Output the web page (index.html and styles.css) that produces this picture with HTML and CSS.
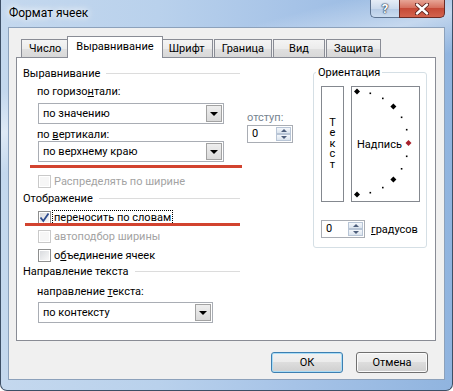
FILE: index.html
```html
<!DOCTYPE html>
<html lang="ru">
<head>
    <meta charset="UTF-8">
    <title>Формат ячеек</title>
    <link rel="stylesheet" href="styles.css">
</head>
<body>
<div class="window">
    <!-- Заголовок окна -->
    <div class="titlebar">
        <span class="title">Формат ячеек</span>
        <div class="caption">
            <span class="cap-btn cap-help">?</span>
            <span class="cap-btn cap-close">
                <svg width="14" height="12" viewBox="0 0 14 12">
                    <path d="M2 1.5 L12 10.5 M12 1.5 L2 10.5" stroke="#5a1f1a" stroke-width="4.2" stroke-linecap="round"/>
                    <path d="M2 1.5 L12 10.5 M12 1.5 L2 10.5" stroke="#fff" stroke-width="2.4" stroke-linecap="round"/>
                </svg>
            </span>
        </div>
    </div>

    <div class="client">
        <div class="tabs">
            <div class="tab">Число</div>
            <div class="tab active">Выравнивание</div>
            <div class="tab">Шрифт</div>
            <div class="tab">Граница</div>
            <div class="tab">Вид</div>
            <div class="tab">Защита</div>
        </div>

        <div class="panel">
            <!-- Левая колонка -->
            <div class="col-main">
                <div class="group-title">Выравнивание</div>
                <div class="field-label label-h">по горизо<u>н</u>тали:</div>
                <div class="combo combo-h">
                    <span class="combo-value">по значению</span>
                    <span class="combo-btn"></span>
                </div>
                <div class="field-label label-v">по <u>в</u>ертикали:</div>
                <div class="combo">
                    <span class="combo-value">по верхнему краю</span>
                    <span class="combo-btn"></span>
                </div>
                <div class="check check-first disabled">
                    <span class="box"></span>
                    <span>Распределять по ширине</span>
                </div>

                <div class="group-title title-display">Отображение</div>
                <div class="check check-wrap">
                    <span class="box">
                        <svg width="11" height="11" viewBox="0 0 11 11">
                            <path d="M1.5 5.5 L4.3 9 L9.5 1.5" fill="none" stroke="#2d4b8e" stroke-width="1.8"/>
                        </svg>
                    </span>
                    <span class="focus">переносить по словам</span>
                </div>
                <div class="check disabled">
                    <span class="box"></span>
                    <span>автоподбор ширины</span>
                </div>
                <div class="check">
                    <span class="box"></span>
                    <span>о<u>б</u>ъединение ячеек</span>
                </div>

                <div class="group-title title-dir">Направление текста</div>
                <div class="field-label label-dir">направление <u>т</u>екста:</div>
                <div class="combo combo-dir">
                    <span class="combo-value">по контексту</span>
                    <span class="combo-btn"></span>
                </div>
            </div>

            <!-- Отступ -->
            <div class="col-indent">
                <div class="indent-label">отступ:</div>
                <div class="spin spin-indent">
                    <span class="spin-value">0</span>
                    <span class="spin-btns"><span class="spin-up"></span><span class="spin-down"></span></span>
                </div>
            </div>

            <!-- Ориентация -->
            <fieldset class="orient">
                <legend>Ориентация</legend>
                <div class="orient-boxes">
                    <div class="vtext"><span class="vtext-word">Текст</span></div>
                    <div class="arc">
                        <svg class="arc-dots" width="67" height="114" viewBox="0 0 67 114">
                            <polygon points="5,1.5 8,4.5 5,7.5 2,4.5" fill="#000"/>
                            <rect x="17.5" y="5.5" width="1.6" height="1.6" fill="#000"/>
                            <rect x="30" y="10.6" width="1.6" height="1.6" fill="#000"/>
                            <polygon points="41.4,16.6 44.4,19.6 41.4,22.6 38.4,19.6" fill="#000"/>
                            <rect x="48.8" y="29.5" width="1.6" height="1.6" fill="#000"/>
                            <rect x="53.9" y="41.9" width="1.6" height="1.6" fill="#000"/>
                            <polygon points="56.5,53 59.5,56 56.5,59 53.5,56" fill="#a8202c"/>
                            <rect x="53.9" y="68.5" width="1.6" height="1.6" fill="#000"/>
                            <rect x="48.8" y="81" width="1.6" height="1.6" fill="#000"/>
                            <polygon points="41.4,89.4 44.4,92.4 41.4,95.4 38.4,92.4" fill="#000"/>
                            <rect x="30" y="99.8" width="1.6" height="1.6" fill="#000"/>
                            <rect x="17.5" y="104.9" width="1.6" height="1.6" fill="#000"/>
                            <polygon points="5,104.5 8,107.5 5,110.5 2,107.5" fill="#000"/>
                        </svg>
                        <span class="arc-label">Надпись</span>
                    </div>
                </div>
                <div class="degree">
                    <div class="spin spin-degree">
                        <span class="spin-value">0</span>
                        <span class="spin-btns"><span class="spin-up"></span><span class="spin-down"></span></span>
                    </div>
                    <span><u>г</u>радусов</span>
                </div>
            </fieldset>

            <!-- Красные пометки поверх -->
            <div class="mark mark-1"></div>
            <div class="mark mark-2"></div>
        </div>

        <div class="actions">
            <button class="btn btn-default">ОК</button>
            <button class="btn">Отмена</button>
        </div>
    </div>
</div>
</body>
</html>
```

FILE: styles.css
```css
* {
    box-sizing: border-box;
}
body {
    margin: 0;
    font-family: Roboto, "Liberation Sans", sans-serif;
    font-size: 11px;
    color: #000;
}
u {
    text-underline-offset: 1px;
}

/* Рамка окна (Aero) */
.window {
    width: 453px;
    height: 391px;
    padding: 0 7px 10px 7px;
    border: 1px solid #3d4f66;
    border-top: none;
    border-radius: 0 0 7px 7px;
    display: flex;
    flex-direction: column;
    background:
        linear-gradient(165deg, rgba(255,255,255,0) 18%, rgba(255,255,255,.45) 26%, rgba(255,255,255,0) 34%),
        linear-gradient(to right, #c4d8ee 0%, #b9d1ec 35%, #a6c3e7 65%, #90b4df 100%);
}
.titlebar {
    height: 27px;
    display: flex;
    justify-content: space-between;
    align-items: flex-start;
}
.title {
    padding: 6px 0 0 1px;
    line-height: 15px;
    font-size: 12px;
    text-shadow: 0 0 6px #fff, 0 0 10px #fff;
}
.caption {
    display: flex;
}
.cap-btn {
    height: 18px;
    display: flex;
    align-items: center;
    justify-content: center;
}
.cap-help {
    width: 29px;
    border: 1px solid #5d7390;
    border-top: none;
    border-right: none;
    border-radius: 0 0 0 5px;
    background: linear-gradient(#e6edf6, #cbdaec 50%, #b6cbe5 51%, #cbdcf0);
    color: #fff;
    font-weight: bold;
    font-size: 13px;
    text-shadow: 0 0 1px #203550, 0 0 1px #203550, 0 0 2px #203550;
}
.cap-close {
    width: 46px;
    border: 1px solid #6a2a25;
    border-top: none;
    border-radius: 0 0 5px 0;
    background: linear-gradient(#e7a596, #d6715f 45%, #c54a37 50%, #d3634e);
}

/* Клиентская область */
.client {
    flex: 1;
    border: 1px solid #8ca1bb;
    background: #f0f0f0;
    padding: 8px 8px 0 7px;
}
.tabs {
    height: 21px;
    display: flex;
    align-items: flex-end;
    padding-left: 5px;
}
.tab {
    height: 18px;
    min-width: 52px;
    padding: 0 7px;
    margin-right: 1px;
    border: 1px solid #898c95;
    border-bottom: none;
    background: linear-gradient(#f4f4f4, #ececec 50%, #e0e0e0 50%, #d8d8d8);
    line-height: 17px;
    text-align: center;
    white-space: nowrap;
}
.tab:first-child {
    min-width: 48px;
}
.tab.active {
    height: 22px;
    margin: 0 -2px -1px -3px;
    padding: 0 8px;
    background: #fff;
    position: relative;
    z-index: 2;
    line-height: 20px;
}

/* Вкладка */
.panel {
    position: relative;
    height: 284px;
    border: 1px solid #898c95;
    background: #fff;
    padding: 8px 7px 0 6px;
    display: flex;
    align-items: flex-start;
}
.col-main {
    width: 217px;
    display: flex;
    flex-direction: column;
}
.group-title {
    height: 15px;
    line-height: 15px;
    display: flex;
    align-items: center;
}
.group-title::after {
    content: "";
    flex: 1;
    margin-left: 6px;
    border-top: 1px solid #dcdcdc;
}
.field-label {
    margin-left: 14px;
    line-height: 15px;
}
.label-h { margin-top: 3px; }
.label-v { margin-top: 3px; }
.label-dir { margin-top: 5px; }

.combo {
    margin-left: 15px;
    width: 186px;
    height: 21px;
    border: 1px solid #a9adb4;
    background: #fff;
    display: flex;
    align-items: center;
    padding: 1px;
}
.combo-h { margin-top: 4px; }
.combo-dir {
    width: 175px;
    margin-top: 3px;
}
.label-v + .combo {
    margin-top: -1px;
}
.combo-value {
    flex: 1;
    padding-left: 3px;
}
.combo-btn {
    width: 16px;
    height: 17px;
    border: 1px solid #a2a2a2;
    background: linear-gradient(#eeeeee, #dadada);
    display: flex;
    align-items: center;
    justify-content: center;
}
.combo-btn::after {
    content: "";
    border-left: 4px solid transparent;
    border-right: 4px solid transparent;
    border-top: 4px solid #000;
}

.check {
    margin: 4px 0 0 15px;
    height: 15px;
    display: flex;
    align-items: center;
    gap: 3px;
}
.check-first { margin-top: 12px; }
.box {
    width: 13px;
    height: 13px;
    border: 1px solid #8e8f8f;
    background: linear-gradient(135deg, #d6d8dc, #fbfbfb);
    box-shadow: inset 0 0 0 1px #fff;
    display: flex;
    align-items: center;
    justify-content: center;
}
.check.disabled {
    color: #a3a3a3;
}
.check.disabled .box {
    border-color: #c9c9c9;
    background: #f6f6f6;
}
.focus {
    outline: 1px dotted #000;
    padding: 0 1px;
    margin-left: -1px;
}
.title-display { margin-top: 2px; }
.title-dir { margin-top: 1px; }

/* Отступ */
.col-indent {
    width: 46px;
    margin: 44px 0 0 7px;
}
.indent-label {
    color: #76838f;
    line-height: 15px;
}
.spin {
    height: 18px;
    border: 1px solid #a9adb4;
    background: #fff;
    display: flex;
    padding: 1px;
}
.spin-indent {
    width: 46px;
}
.spin-value {
    flex: 1;
    padding-left: 3px;
    line-height: 14px;
}
.spin-btns {
    width: 15px;
    display: flex;
    flex-direction: column;
}
.spin-up,
.spin-down {
    flex: 1;
    border: 1px solid #b8c5d6;
    background: linear-gradient(#f4f7fb, #dbe4ee);
    display: flex;
    align-items: center;
    justify-content: center;
}
.spin-up::after {
    content: "";
    border-left: 3px solid transparent;
    border-right: 3px solid transparent;
    border-bottom: 3px solid #4e5f7c;
}
.spin-down::after {
    content: "";
    border-left: 3px solid transparent;
    border-right: 3px solid transparent;
    border-top: 3px solid #4e5f7c;
}

/* Ориентация */
.orient {
    width: 114px;
    margin: -1px 0 0 20px;
    padding: 6px 6px 9px 7px;
    border: 1px solid #d5dfe5;
    border-radius: 3px;
    min-width: 0;
}
.orient legend {
    padding: 0 2px;
    margin-left: -5px;
    line-height: 15px;
}
.orient-boxes {
    display: flex;
    gap: 7px;
    height: 116px;
}
.vtext {
    width: 23px;
    border: 1px solid #84888f;
    display: flex;
    align-items: center;
    justify-content: center;
}
.vtext-word {
    width: 9px;
    word-break: break-all;
    text-align: center;
    line-height: 10.5px;
}
.arc {
    position: relative;
    width: 69px;
    border: 1px solid #84888f;
    display: flex;
    align-items: center;
    padding-left: 5px;
}
.arc-dots {
    position: absolute;
    left: 0;
    top: 0;
}
.arc-label {
    position: relative;
}
.degree {
    margin-top: 18px;
    display: flex;
    align-items: center;
    gap: 6px;
}
.spin-degree {
    width: 44px;
}

/* Красные пометки */
.mark {
    position: absolute;
    height: 3px;
    background: #d2432f;
}
.mark-1 {
    left: 13px;
    top: 107px;
    width: 212px;
}
.mark-2 {
    left: 8px;
    top: 165px;
    width: 215px;
}

/* Кнопки */
.actions {
    margin-top: 11px;
    padding-right: 8px;
    display: flex;
    justify-content: flex-end;
    gap: 13px;
}
.btn {
    width: 72px;
    height: 21px;
    padding: 0;
    border: 1px solid #707070;
    border-radius: 3px;
    background: linear-gradient(#f2f2f2, #ebebeb 50%, #dddddd 50%, #cfcfcf);
    box-shadow: inset 0 0 0 1px #fbfbfb;
    font: inherit;
    color: #000;
}
.btn-default {
    border-color: #3c7fb1;
    box-shadow: inset 0 0 0 1px #a9dcf6;
}
```
